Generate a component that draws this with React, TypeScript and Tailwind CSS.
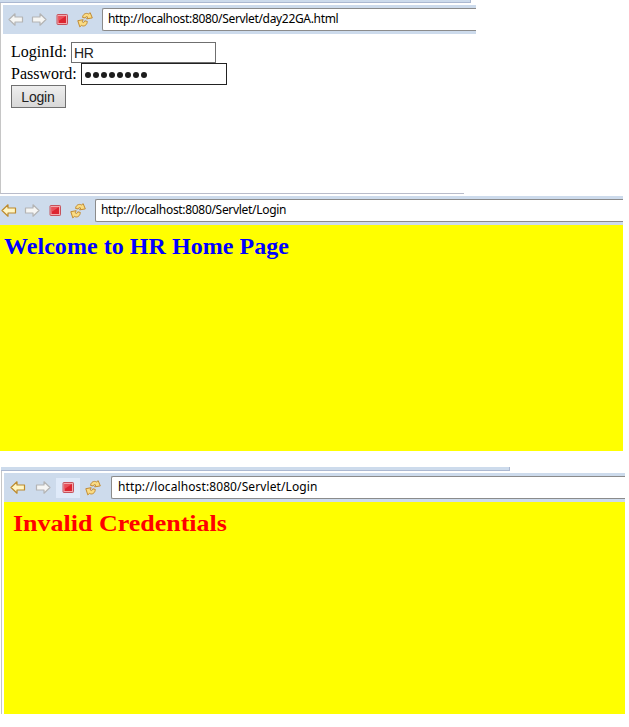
type ArrowProps = { active?: boolean; flip?: boolean };

function Arrow({ active = false, flip = false }: ArrowProps) {
  return (
    <svg width="16" height="16" viewBox="0 0 16 16" className={flip ? "-scale-x-100" : ""}>
      <path
        d="M1 7.5 L7 1.8 V5 H14.5 V10 H7 V13.2 Z"
        fill={active ? "#fff6c4" : "#f6f6f4"}
        stroke={active ? "#bd8a2c" : "#b4b4b4"}
        strokeWidth="1.2"
        strokeLinejoin="round"
      />
    </svg>
  );
}

function Stop() {
  return (
    <svg width="16" height="16" viewBox="0 0 16 16">
      <rect x="3" y="2.5" width="10.5" height="10" rx="0.8" fill="#f3a9ad" stroke="#c5525c" />
      <rect x="4.5" y="4" width="7.5" height="7" fill="#dc2430" />
      <path d="M4.5 4 H12 L4.5 9 Z" fill="#e9505a" />
    </svg>
  );
}

function Refresh() {
  return (
    <svg width="16" height="16" viewBox="0 0 16 16" fill="#fbdc83" stroke="#c18b35" strokeWidth="1" strokeLinejoin="round">
      <path d="M5.5 5.4 C6 2 8.8 0.6 11.6 1.9 L13.2 0.7 L15.3 5.9 L9.6 6.9 L10.7 5 C9.3 4.2 8.5 4.8 8.2 6 Z" />
      <path d="M0.8 8.7 L6.2 7.7 L5.2 9.8 C6.4 11 7.5 10.4 7.8 8.8 L10.3 9.4 C10.2 13 7.2 15 4.4 13.4 L2.8 14.9 Z" />
    </svg>
  );
}

type ToolbarProps = { url: string; active?: boolean; hover?: boolean; pad: string; urlGap: string; spacing: string };

function Toolbar({ url, active, hover, pad, urlGap, spacing }: ToolbarProps) {
  return (
    <div className={`flex h-[29px] items-center overflow-hidden bg-[#cddbec] ${pad}`}>
      <div className={`flex shrink-0 items-center ${urlGap}`}>
        <Arrow active={active} />
        <Arrow flip />
        <span className={hover ? "-mx-1 bg-[#dfeaf9] px-1 py-0.5" : ""}>
          <Stop />
        </span>
        <Refresh />
      </div>
      <div className="flex h-[23px] grow items-center rounded-l-[2px] border border-r-0 border-[#8b8b8b] bg-white pb-px pl-[5px]">
        <span className={`whitespace-nowrap font-['Noto_Sans',sans-serif] text-[12px] leading-[16px] text-black ${spacing}`}>{url}</span>
      </div>
    </div>
  );
}

export default function App() {
  return (
    <main className="h-[727px] w-[629px] overflow-hidden bg-white font-['Liberation_Serif',serif] text-black">
      <section className="h-[196px]">
        <div className="h-[3px] w-[471px] border-r border-b border-[#abb8d1] bg-[#cddbec]" />
        <div className="h-[191px] w-[464px] border-b border-l border-b-[#b9bcca] border-l-[#c6c6c6] pt-[2px] pl-[2px]">
          <div className="w-[473px]">
            <Toolbar url="http://localhost:8080/Servlet/day22GA.html" pad="pl-[5px]" urlGap="gap-[7px] mr-[9px]" spacing="tracking-[-0.33px]" />
          </div>
          <form className="pt-[7px] pl-2 text-[16px] leading-[22px]">
            <label className="flex h-[22px] items-center">
              <span className="w-[60px] whitespace-nowrap">LoginId:</span>
              <input className="h-[21px] w-[145px] border border-[#6f6f6f] bg-white px-[2px] pt-px font-['Liberation_Sans',sans-serif] text-[14px] tracking-[-0.4px] text-[#222] outline-none" defaultValue="HR" />
            </label>
            <label className="flex h-[22px] items-center">
              <span className="w-[70px] whitespace-nowrap">Password:</span>
              <span className="flex h-[22px] w-[146px] items-center gap-[2px] border border-[#222] pt-px pl-[3px]">
                {Array.from({ length: 8 }, (_, i) => (
                  <i key={i} className="size-[6px] rounded-full bg-[#1c1c1c]" />
                ))}
              </span>
            </label>
            <button type="button" className="block h-[23px] w-[55px] border border-[#707070] bg-linear-to-b from-[#eeeeee] to-[#d8d8d8] pr-px font-['Liberation_Sans',sans-serif] text-[14px] leading-[20px] tracking-[-0.2px] text-[#222]">
              Login
            </button>
          </form>
        </div>
      </section>
      <section className="h-[255px] w-[623px] bg-[#ffff00]">
        <Toolbar active url="http://localhost:8080/Servlet/Login" pad="pl-[1px]" urlGap="gap-[7px] mr-[9px]" spacing="tracking-[-0.31px]" />
        <h1 className="pt-[7px] pl-1 text-[24px] leading-[28px] font-bold tracking-[0.05px] whitespace-nowrap text-[#0000ff]">Welcome to HR Home Page</h1>
      </section>
      <section className="ml-px pt-4">
        <div className="h-[4px] w-[509px] border-r border-b border-[#abb8d1] bg-[#cddbec]" />
        <div className="w-[624px] border-l border-[#c6c6c6] pt-[2px] pl-[2px]">
          <div className="h-[241px] bg-[#ffff00]">
            <Toolbar active hover url="http://localhost:8080/Servlet/Login" pad="pl-[6px]" urlGap="gap-[9px] mr-[10px]" spacing="pl-px tracking-[0.1px]" />
            <h1 className="ml-[9px] w-fit origin-left scale-x-[1.082] pt-[7px] text-[24px] leading-[28px] font-bold whitespace-nowrap text-[#ff0000]">Invalid Credentials</h1>
          </div>
        </div>
      </section>
    </main>
  );
}
